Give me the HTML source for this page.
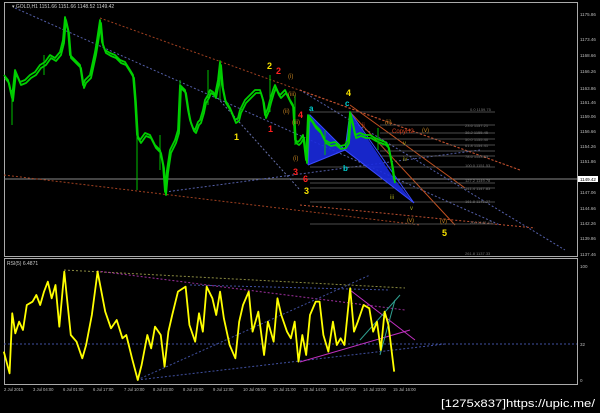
<!DOCTYPE html>
<html><head><meta charset="utf-8"><style>
html,body{margin:0;padding:0;background:#000;width:600px;height:413px;overflow:hidden}
svg{display:block}
text{font-family:"Liberation Sans",sans-serif}
</style></head><body>
<svg width="600" height="413" viewBox="0 0 600 413" xmlns="http://www.w3.org/2000/svg">
<rect width="600" height="413" fill="#000"/>
<rect x="4.5" y="2.5" width="573" height="254" fill="none" stroke="#aaa" stroke-width="1"/>
<rect x="4.5" y="258.5" width="573" height="126" fill="none" stroke="#aaa" stroke-width="1"/>
<line x1="4" y1="179" x2="577" y2="179" stroke="#888" stroke-width="1"/>
<g fill="none" stroke-dasharray="2,2" stroke-width="1">
<line x1="15" y1="8" x2="500" y2="225" stroke="#5560aa"/>
<line x1="100" y1="18" x2="520" y2="170" stroke="#a04020"/>
<line x1="4" y1="175" x2="420" y2="225" stroke="#a04020"/>
<line x1="300" y1="90" x2="565" y2="250" stroke="#5560aa"/>
<line x1="165" y1="192" x2="480" y2="150" stroke="#5560aa"/>
<line x1="215" y1="95" x2="300" y2="190" stroke="#6670aa"/>
<line x1="300" y1="90" x2="520" y2="170" stroke="#c05030"/>
<line x1="300" y1="205" x2="535" y2="228" stroke="#c05030"/>
</g>
<g stroke="#c05020" stroke-width="1">
<line x1="350" y1="112" x2="455" y2="225"/>
<line x1="350" y1="105" x2="465" y2="188"/>
</g>
<g stroke="#666" stroke-width="0.7">
<line x1="310" y1="112" x2="495" y2="112"/>
<line x1="380" y1="125" x2="495" y2="125"/>
<line x1="380" y1="133" x2="495" y2="133"/>
<line x1="380" y1="139" x2="495" y2="139"/>
<line x1="380" y1="145" x2="495" y2="145"/>
<line x1="380" y1="151" x2="495" y2="151"/>
<line x1="380" y1="156" x2="495" y2="156"/>
<line x1="310" y1="167" x2="495" y2="167"/>
<line x1="310" y1="183" x2="495" y2="183"/>
<line x1="310" y1="188" x2="495" y2="188"/>
<line x1="310" y1="202" x2="495" y2="202"/>
<line x1="310" y1="224" x2="495" y2="224"/>
</g>
<g font-size="4" fill="#777">
<text x="470" y="111">0.0 1159.75</text><text x="465" y="127">23.6 1157.21</text><text x="465" y="134">38.2 1155.45</text>
<text x="465" y="141">50.0 1155.40</text><text x="465" y="147">61.8 1154.41</text><text x="465" y="158">78.6 1153.53</text>
<text x="465" y="167">100.0 1151.53</text><text x="465" y="182">127.2 1149.78</text><text x="465" y="190">141.4 1147.83</text>
<text x="465" y="203">161.8 1146.37</text><text x="470" y="224">200 1142.47</text><text x="465" y="255">261.8 1137.33</text>
</g>
<polygon points="308,165 310,115 345,150" fill="#1a2adf" opacity="0.9"/>
<polygon points="345,150 350,112 395,180 414,203" fill="#1a2adf" opacity="0.9"/>
<polyline points="308,165 310,115 345,150 350,112 414,203 345,150 308,165" fill="none" stroke="#3a4aff" stroke-width="1"/>
<g fill="none" stroke="#00d000" stroke-width="1.8" stroke-linejoin="round">
<polyline transform="translate(1,3)" points="4,75 8,80 12,98 15,70 20,82 25,80 30,75 35,72 40,65 45,62 50,55 55,58 60,52 63,40 65,17 68,30 70,55 75,60 80,65 83,85 85,80 90,75 95,52 97,40 100,20 102,42 105,50 110,53 115,55 120,60 125,62 130,70 133,75 135,100 137,135 140,140 145,133 150,135 155,145 160,150 163,165 165,192 167,170 170,150 175,140 178,130 180,85 183,88 185,90 188,110 190,120 193,128 195,130 198,122 200,120 203,110 205,100 208,95 210,90 213,92 215,95 218,80 220,62 222,85 225,100 230,108 235,120 238,118 240,110 245,100 250,95 255,90 260,90 263,100 265,115 268,108 270,100 273,90 275,85 278,92 280,95 285,90 290,100 293,105 295,140 298,142 300,140 303,135 306,160 308,115 312,120 315,125 320,130 325,140 330,143 335,142 340,146 345,145 348,140 350,112 353,125 355,135 360,133 365,135 370,135 375,138 380,140 385,142 388,145 390,155 392,165 394,180"/>
<polyline points="4,75 8,80 12,98 15,70 20,82 25,80 30,75 35,72 40,65 45,62 50,55 55,58 60,52 63,40 65,17 68,30 70,55 75,60 80,65 83,85 85,80 90,75 95,52 97,40 100,20 102,42 105,50 110,53 115,55 120,60 125,62 130,70 133,75 135,100 137,135 140,140 145,133 150,135 155,145 160,150 163,165 165,192 167,170 170,150 175,140 178,130 180,85 183,88 185,90 188,110 190,120 193,128 195,130 198,122 200,120 203,110 205,100 208,95 210,90 213,92 215,95 218,80 220,62 222,85 225,100 230,108 235,120 238,118 240,110 245,100 250,95 255,90 260,90 263,100 265,115 268,108 270,100 273,90 275,85 278,92 280,95 285,90 290,100 293,105 295,140 298,142 300,140 303,135 306,160 308,115 312,120 315,125 320,130 325,140 330,143 335,142 340,146 345,145 348,140 350,112 353,125 355,135 360,133 365,135 370,135 375,138 380,140 385,142 388,145 390,155 392,165 394,180"/>
</g>
<g stroke="#00c000" stroke-width="1">
<line x1="12" y1="90" x2="12" y2="125"/><line x1="44" y1="55" x2="44" y2="75"/><line x1="137" y1="120" x2="137" y2="190"/>
<line x1="160" y1="135" x2="160" y2="170"/><line x1="180" y1="80" x2="180" y2="120"/><line x1="208" y1="70" x2="208" y2="105"/>
<line x1="220" y1="60" x2="220" y2="100"/><line x1="270" y1="75" x2="270" y2="112"/><line x1="295" y1="95" x2="295" y2="145"/>
<line x1="325" y1="130" x2="325" y2="155"/><line x1="378" y1="128" x2="378" y2="150"/>
</g>
<g fill="#f5e000" font-weight="bold" font-size="9">
<text x="267" y="69">2</text><text x="234" y="140">1</text><text x="304" y="194">3</text><text x="346" y="96">4</text><text x="442" y="236">5</text>
</g>
<g fill="#ff2020" font-weight="bold" font-size="9">
<text x="276" y="74">2</text><text x="268" y="132">1</text><text x="298" y="118">4</text><text x="303" y="182">6</text><text x="293" y="175">3</text>
</g>
<g fill="#00d0d0" font-weight="bold" font-size="8">
<text x="309" y="111">a</text><text x="345" y="106">c</text><text x="343" y="171">b</text>
</g>
<g font-size="6" fill="#c08020">
<text x="288" y="78">(i)</text><text x="288" y="96">(iii)</text><text x="283" y="113">(ii)</text><text x="292" y="124">(iii)</text>
<text x="293" y="160">(i)</text><text x="385" y="124">(ii)</text><text x="422" y="132">(v)</text><text x="407" y="222">(v)</text><text x="440" y="223">(v)</text>
<text x="392" y="133" fill="#d04020">CopyH2 </text><text x="362" y="127" fill="#d04020">ii</text>
<text x="403" y="145" fill="#a0a020">v</text><text x="403" y="161" fill="#a0a020">iv</text><text x="390" y="199" fill="#a0a020">iii</text><text x="410" y="210" fill="#a0a020">v</text>
</g>
<text x="12" y="8" font-size="5" fill="#ccc">▾ GOLD,H1  1151.66  1151.66  1148.52  1149.42</text>
<g font-size="4.5" fill="#bbb">
<text x="580" y="16">1175.86</text><text x="580" y="41">1173.46</text><text x="580" y="57">1168.66</text><text x="580" y="73">1166.26</text>
<text x="580" y="90">1163.86</text><text x="580" y="104">1161.46</text><text x="580" y="118">1159.06</text><text x="580" y="133">1156.66</text>
<text x="580" y="148">1154.26</text><text x="580" y="163">1151.86</text><text x="580" y="194">1147.06</text><text x="580" y="210">1144.66</text>
<text x="580" y="225">1142.26</text><text x="580" y="240">1139.86</text><text x="580" y="256">1137.46</text><text x="580" y="268">100</text>
<text x="580" y="346">32</text><text x="580" y="382">0</text>
</g>
<rect x="578" y="176" width="20" height="6" fill="#fff"/>
<text x="580" y="181" font-size="4.5" fill="#000">1149.42</text>
<text x="7" y="265" font-size="5" fill="#ccc">RSI(5) 6.4871</text>
<line x1="4" y1="344" x2="577" y2="344" stroke="#4050a0" stroke-dasharray="2,2"/>
<g fill="none" stroke-width="1" stroke-dasharray="2,2">
<line x1="64" y1="270" x2="405" y2="288" stroke="#8a8a40"/>
<line x1="97" y1="271" x2="405" y2="310" stroke="#a030a0"/>
<line x1="137" y1="380" x2="370" y2="275" stroke="#4050a0"/>
<line x1="137" y1="380" x2="445" y2="344" stroke="#4050a0"/>
<line x1="190" y1="285" x2="390" y2="290" stroke="#4050a0"/>
</g>
<g fill="none" stroke-width="1">
<line x1="300" y1="362" x2="410" y2="330" stroke="#c030c0"/>
<line x1="350" y1="290" x2="415" y2="340" stroke="#c030c0"/>
<line x1="360" y1="340" x2="400" y2="295" stroke="#30a090"/>
<line x1="380" y1="355" x2="395" y2="300" stroke="#30a090"/>
</g>
<g transform="translate(0,255) scale(0.3827,0.3333)">
<polyline vector-effect="non-scaling-stroke" fill="none" stroke="#ffff00" stroke-width="1.8" stroke-linejoin="round" points="10,290 25,355 32,175 40,235 50,200 60,225 70,150 85,140 95,120 105,150 115,110 125,80 135,130 145,90 155,215 168,50 175,130 185,240 200,260 215,310 225,270 240,180 255,50 265,110 275,170 290,220 305,195 320,250 330,240 345,310 360,375 370,330 380,270 385,240 395,280 405,215 420,240 430,335 440,230 450,180 465,110 485,95 495,210 510,260 520,175 530,230 540,95 555,130 565,180 575,110 585,190 600,270 615,310 625,200 635,150 650,110 660,230 675,170 690,300 700,200 715,260 725,130 735,180 750,230 760,250 770,200 780,320 790,240 800,300 810,180 825,140 835,140 845,240 858,290 870,200 880,270 890,250 900,270 915,100 925,230 935,200 950,150 965,160 975,230 985,200 995,285 1005,170 1015,210 1030,350"/>
</g>
<g font-size="4.2" fill="#bbb">
<text x="4" y="391">2 Jul 2015</text><text x="33" y="391">3 Jul 04:00</text><text x="63" y="391">6 Jul 01:00</text>
<text x="93" y="391">6 Jul 17:00</text><text x="124" y="391">7 Jul 10:00</text><text x="153" y="391">8 Jul 03:00</text>
<text x="183" y="391">8 Jul 19:00</text><text x="213" y="391">9 Jul 12:00</text><text x="243" y="391">10 Jul 05:00</text>
<text x="273" y="391">10 Jul 21:00</text><text x="303" y="391">13 Jul 14:00</text><text x="333" y="391">14 Jul 07:00</text>
<text x="363" y="391">14 Jul 23:00</text><text x="393" y="391">15 Jul 16:00</text>
</g>
<text x="441" y="407" font-size="11" fill="#fff" textLength="154" lengthAdjust="spacingAndGlyphs">[1275x837]https://upic.me/</text>
</svg>
</body></html>
